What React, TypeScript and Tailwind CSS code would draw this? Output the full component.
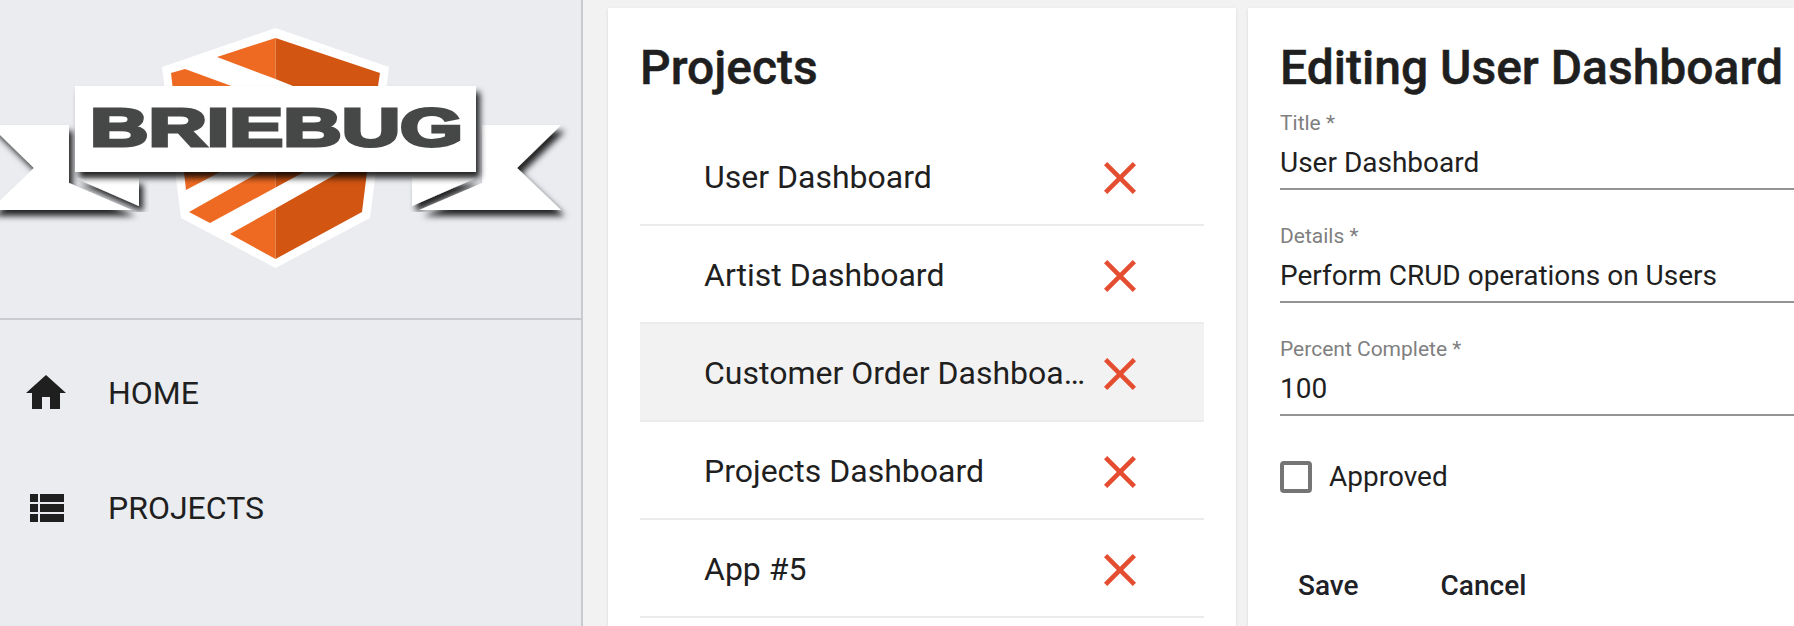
const projects = [
  "User Dashboard",
  "Artist Dashboard",
  "Customer Order Dashboard",
  "Projects Dashboard",
  "App #5",
];

const BrandLogo = () => (
  <svg viewBox="0 0 581 318" className="block w-[581px] h-[318px]">
    <defs>
      <filter id="ribbon-shadow" x="-10%" y="-10%" width="125%" height="130%">
        <feDropShadow dx="4" dy="6" stdDeviation="3" floodColor="#000" floodOpacity="0.85" />
      </filter>
    </defs>

    {/* shield */}
    <polygon points="275.5,28 389,67 370,218 275.5,268 181,218 162,67" fill="#fff" />
    <polygon points="217,57 275.5,38 275.5,79" fill="#ee6a22" />
    <polygon points="275.5,38 380,73 378,86 293,86 275.5,79" fill="#d25511" />
    <polygon points="171,73 185,69 231.5,86 172.5,86" fill="#ee6a22" />
    <polygon points="184,172 220,172 186,190" fill="#ee6a22" />
    <polygon points="189,212 260,172 275.5,172 275.5,187.5 210,223" fill="#ee6a22" />
    <polygon points="275.5,172 304,172 275.5,187.5" fill="#d25511" />
    <polygon points="230,234 275.5,208.5 275.5,259" fill="#ee6a22" />
    <polygon points="275.5,208.5 340,172 367,172 362,212 275.5,259" fill="#d25511" />

    {/* back folds of the ribbon */}
    <polygon points="75,178 139,178 139,206" fill="#fff" filter="url(#ribbon-shadow)" />
    <polygon points="412,178 476,178 412,206" fill="#fff" filter="url(#ribbon-shadow)" />

    {/* ribbon tails */}
    <polygon points="-10,125 69,125 69,183 132,210 -10,210 34,168" fill="#fff" filter="url(#ribbon-shadow)" />
    <polygon points="561,125 482,125 482,183 419,210 561,210 517,168" fill="#fff" filter="url(#ribbon-shadow)" />

    {/* main banner */}
    <rect x="75" y="86" width="401" height="86" fill="#fff" filter="url(#ribbon-shadow)" />
    <text
      x="90"
      y="146"
      textLength="373"
      lengthAdjust="spacingAndGlyphs"
      fontFamily="'Liberation Sans', sans-serif"
      fontWeight="700"
      fontSize="53"
      fill="#464747"
      stroke="#464747"
      strokeWidth="3"
    >
      BRIEBUG
    </text>
  </svg>
);

const NavItem = ({ label, icon }: { label: string; icon: string }) => (
  <a className="flex items-center h-[115px] pl-[22px] text-[32px] text-[#1f1f1f]">
    <svg viewBox="0 0 24 24" className="w-[48px] h-[48px] fill-[#1f1f1f]">
      <path d={icon} />
    </svg>
    <span className="ml-[38px]">{label}</span>
  </a>
);

const ProjectRow = ({ title, active }: { title: string; active?: boolean }) => (
  <li
    className={
      active
        ? "flex items-center h-[98px] border-b-2 border-[#ebebeb] bg-[#f2f2f2] pl-[64px]"
        : "flex items-center h-[98px] border-b-2 border-[#ebebeb] pl-[64px]"
    }
  >
    <span className="w-[385px] truncate text-[32px] leading-[40px] pt-[2px] text-[#1f1f1f]">{title}</span>
    <svg viewBox="5 5 14 14" className="ml-[15px] mt-[4px] w-[32px] h-[32px] fill-[#e44d30]">
      <path d="M19 6.41L17.59 5 12 10.59 6.41 5 5 6.41 10.59 12 5 17.59 6.41 19 12 13.41 17.59 19 19 17.59 13.41 12z" />
    </svg>
  </li>
);

const Field = ({ label, value }: { label: string; value: string }) => (
  <div className="h-[113px] pt-[5px]">
    <div className="text-[21px] leading-[24px] text-[#808080]">{label}</div>
    <div className="h-[39px] mt-[10px] text-[28px] leading-[36px] text-[#1f1f1f] border-b-2 border-[#949494] box-content pb-[4px]">
      {value}
    </div>
  </div>
);

export default function App() {
  return (
    <div className="flex h-[626px] w-[1794px] overflow-hidden bg-[#f2f2f2] font-['Roboto',sans-serif]">
      {/* Sidebar */}
      <aside className="w-[583px] shrink-0 bg-[#eaecf0] border-r-2 border-[#c8cacf]">
        <BrandLogo />
        <div className="border-t-2 border-[#c8cacf] pt-[15px]">
          <NavItem
            label="HOME"
            icon="M10 20v-6h4v6h5v-8h3L12 3 2 12h3v8z"
          />
          <NavItem
            label="PROJECTS"
            icon="M4 14h4v-4H4v4zm0 5h4v-4H4v4zM4 9h4V5H4v4zm5 5h12v-4H9v4zm0 5h12v-4H9v4zM9 5v4h12V5H9z"
          />
        </div>
      </aside>

      {/* Projects list */}
      <section className="ml-[25px] mt-[8px] w-[628px] shrink-0 bg-white shadow-sm px-[32px] pt-[32px]">
        <h1 className="text-[48px] leading-[56px] font-medium text-[#1f1f1f] [-webkit-text-stroke:0.5px_#1f1f1f]">Projects</h1>
        <ul className="mt-[32px]">
          {projects.map((p, i) => (
            <ProjectRow key={p} title={p} active={i === 2} />
          ))}
        </ul>
      </section>

      {/* Edit form */}
      <section className="ml-[12px] mt-[8px] w-[600px] shrink-0 bg-white shadow-sm pl-[32px] pt-[32px]">
        <h1 className="text-[48px] leading-[56px] font-medium text-[#1f1f1f] whitespace-nowrap [-webkit-text-stroke:0.5px_#1f1f1f]">
          Editing User Dashboard
        </h1>
        <form className="mt-[10px]">
          <Field label="Title *" value="User Dashboard" />
          <Field label="Details *" value="Perform CRUD operations on Users" />
          <Field label="Percent Complete *" value="100" />
          <label className="flex items-center mt-[11px] text-[28px] text-[#1f1f1f]">
            <span className="w-[32px] h-[32px] border-4 border-[#757575] rounded-[4px]" />
            <span className="ml-[17px]">Approved</span>
          </label>
          <div className="flex mt-[67px] text-[28px] font-medium text-[#1e2125]">
            <button type="button" className="ml-[18px]">Save</button>
            <button type="button" className="ml-[82px]">Cancel</button>
          </div>
        </form>
      </section>
    </div>
  );
}
